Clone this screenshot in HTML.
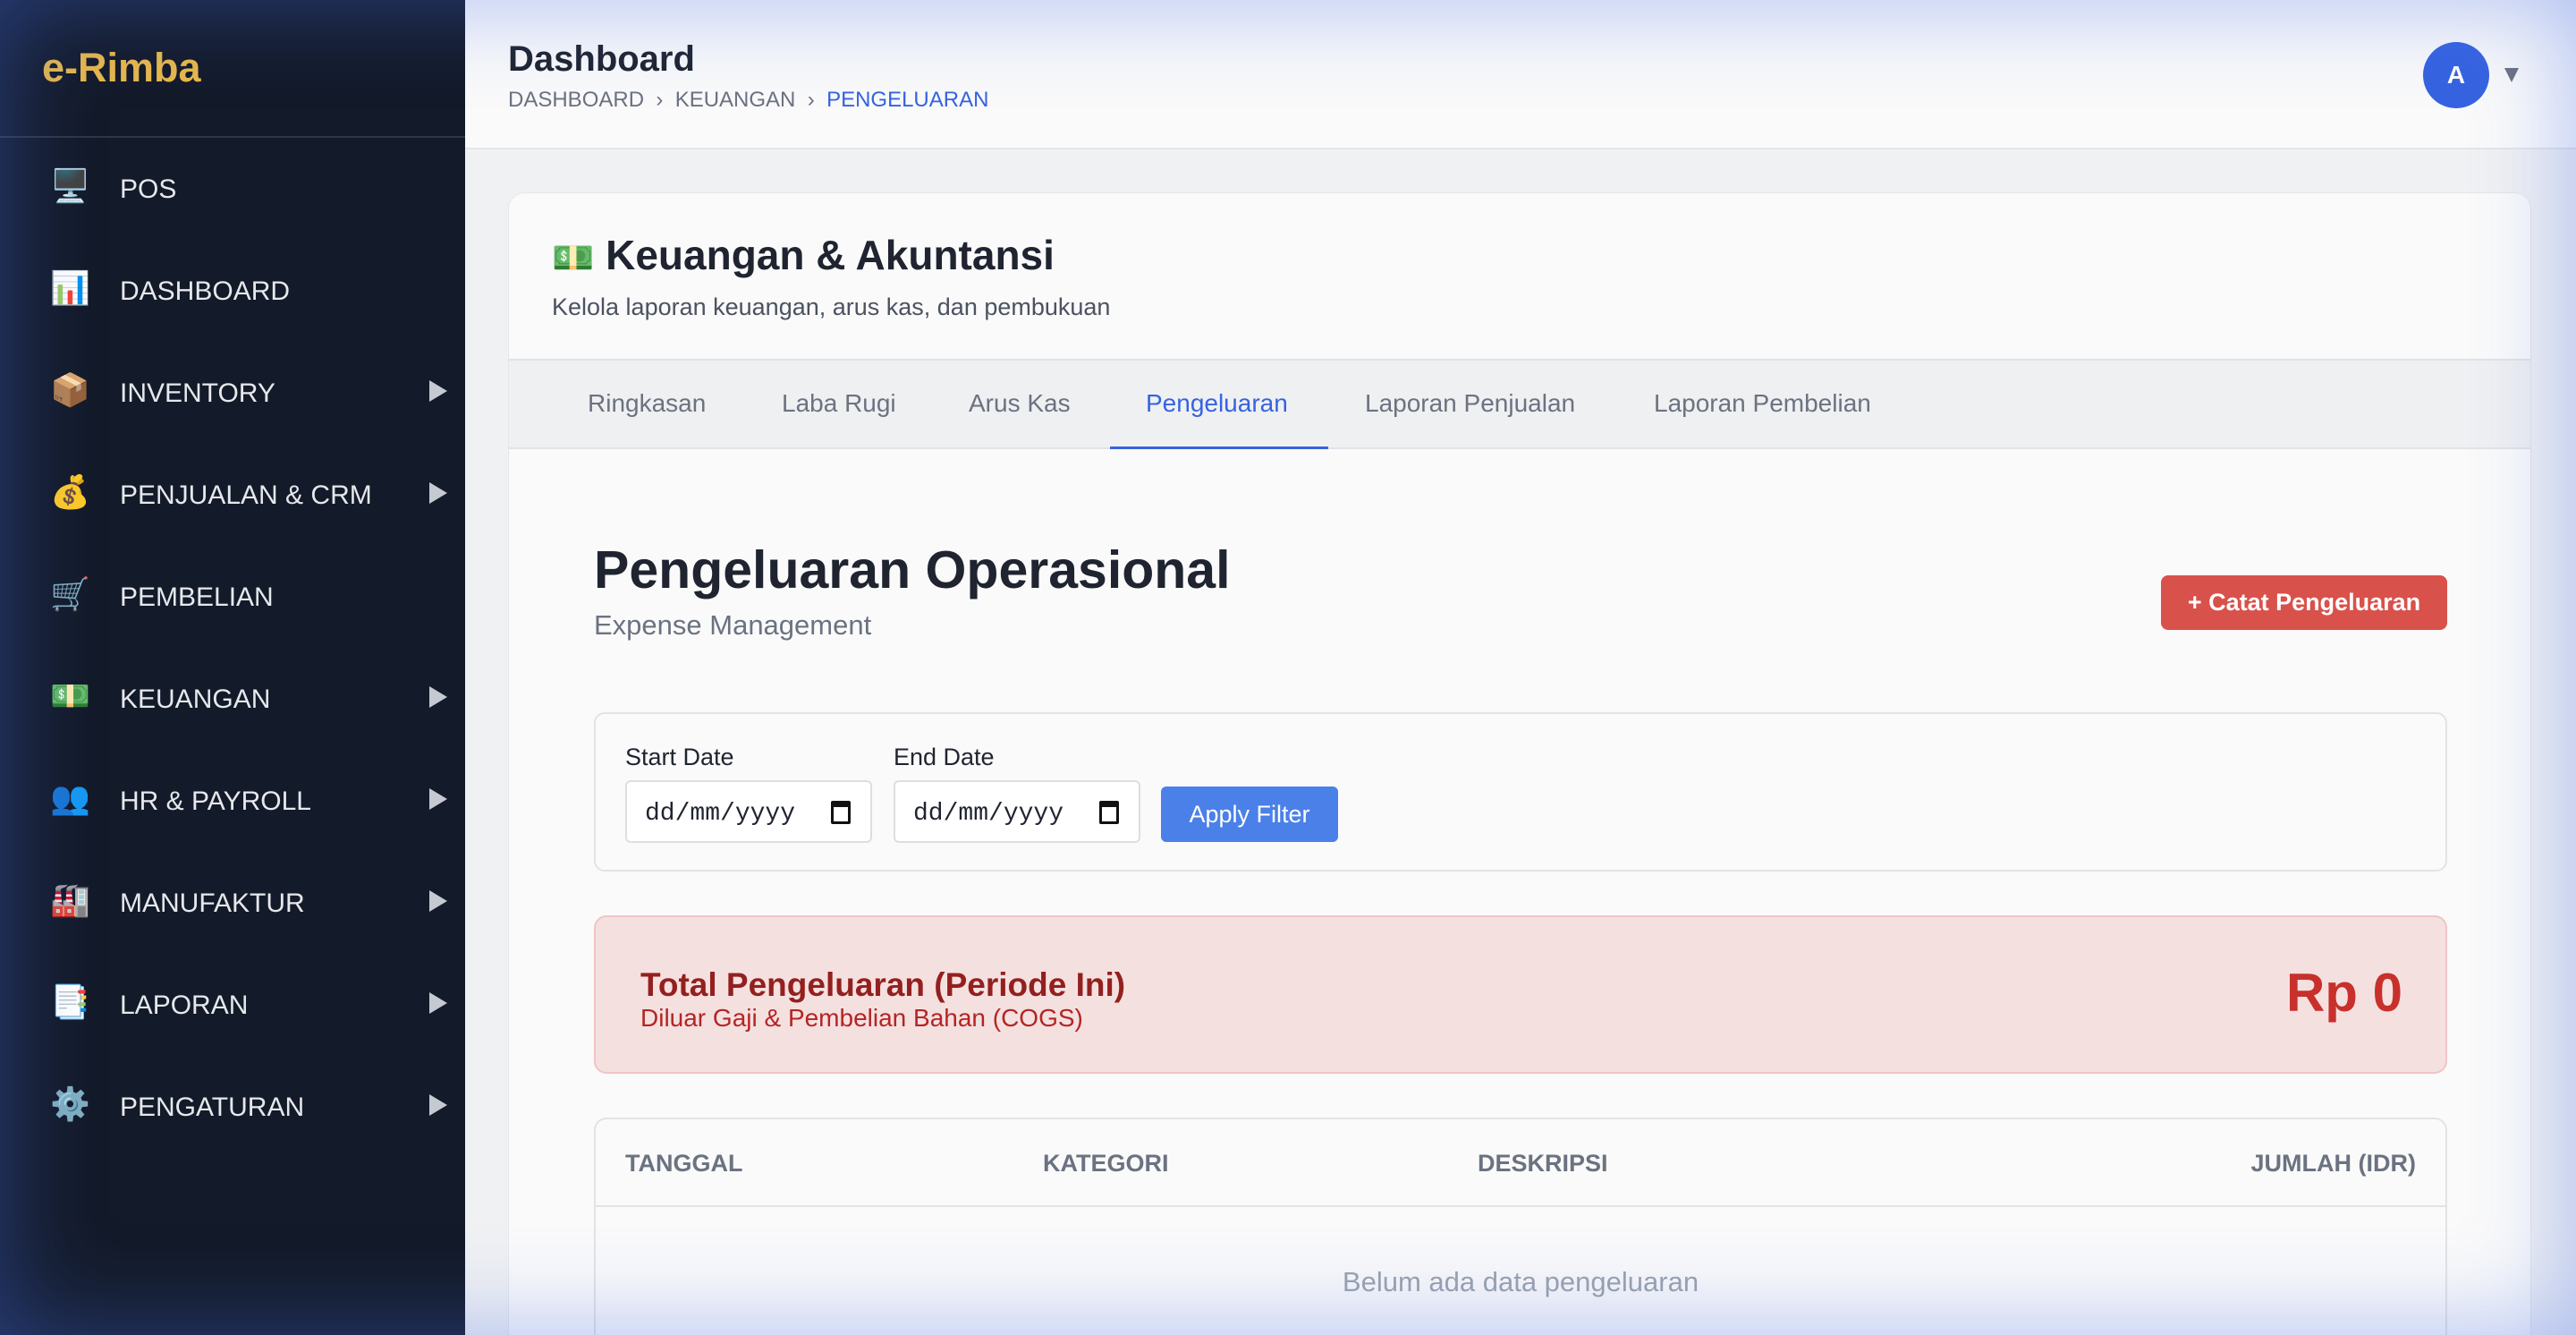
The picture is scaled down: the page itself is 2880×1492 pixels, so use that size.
<!DOCTYPE html>
<html><head><meta charset="utf-8"><style>
*{box-sizing:border-box;margin:0;padding:0}
html{width:2880px;height:1492px;overflow:hidden}
body{width:2880px;height:1492px;overflow:hidden;font-family:"Liberation Sans",sans-serif;background:#f0f1f3;position:relative}
.sb{position:absolute;left:0;top:0;width:520px;height:1492px;background:#131a29}
.logo{position:absolute;left:47px;top:50px;font-size:45px;font-weight:bold;color:#e8b84a}
.div{position:absolute;left:0;top:152px;width:520px;height:2px;background:#2f3647}
.nav{position:absolute;left:0;width:520px;height:60px;color:#e6e8ec;font-size:30px}
.nav .ic{position:absolute;left:56px;top:6px;font-size:36px;width:44px;text-align:center;font-family:"Noto Color Emoji","DejaVu Sans",sans-serif}
.nav .t{position:absolute;left:134px;top:14px}
.nav .ar{position:absolute;left:480px;top:16px;width:0;height:0;border-left:20px solid #c5c9d1;border-top:12px solid transparent;border-bottom:12px solid transparent}
.hd{position:absolute;left:520px;top:0;width:2360px;height:167px;background:#fafafa;border-bottom:2px solid #e4e5e8}
.hd h1{position:absolute;left:48px;top:44px;font-size:40px;color:#1f2430}
.bc{position:absolute;left:48px;top:98px;font-size:24px;color:#6b7280}
.bc b{color:#3663e0;font-weight:normal}
.av{position:absolute;left:2189px;top:47px;width:74px;height:74px;border-radius:50%;background:#3663e0;color:#fff;font-weight:bold;font-size:28px;text-align:center;line-height:74px}
.dd{position:absolute;left:2280px;top:76px;border-top:16px solid #6b7280;border-left:8px solid transparent;border-right:8px solid transparent}
.card{position:absolute;left:568px;top:215px;width:2262px;height:1277px;background:#fafafa;border-radius:18px 18px 0 0;border:1px solid #e6e7ea;border-bottom:none;overflow:hidden}
.ct{position:absolute;left:48px;top:42px;font-size:46px;font-weight:bold;color:#1f2430}
.cs{position:absolute;left:48px;top:112px;font-size:27px;color:#4b5260}
.tabs{position:absolute;left:0;top:185px;width:2260px;height:101px;background:#eff0f2;border-top:2px solid #e2e3e6;border-bottom:2px solid #e2e3e6}
.tab{position:absolute;top:32px;font-size:28px;color:#6b7280}
.ul{position:absolute;left:672px;top:96px;width:244px;height:3px;background:#3663e0}
.abs{position:absolute}
.inp{position:absolute;width:276px;height:70px;border:2px solid #dcdee2;border-radius:6px;background:#fff;font-family:"Liberation Mono",monospace;font-size:28px;padding:20px 0 0 20px;color:#1f2430}
.inp i{position:absolute;right:22px;top:21px;width:22px;height:26px;border:3px solid #111;border-top-width:7px;border-radius:2px}
</style></head><body>
<div class="sb">
<div class="logo">e-Rimba</div><div class="div"></div>
<div class="nav" style="top:181px"><span class="ic">🖥️</span><span class="t">POS</span></div>
<div class="nav" style="top:295px"><span class="ic">📊</span><span class="t">DASHBOARD</span></div>
<div class="nav" style="top:409px"><span class="ic">📦</span><span class="t">INVENTORY</span><span class="ar"></span></div>
<div class="nav" style="top:523px"><span class="ic">💰</span><span class="t">PENJUALAN &amp; CRM</span><span class="ar"></span></div>
<div class="nav" style="top:637px"><span class="ic">🛒</span><span class="t">PEMBELIAN</span></div>
<div class="nav" style="top:751px"><span class="ic">💵</span><span class="t">KEUANGAN</span><span class="ar"></span></div>
<div class="nav" style="top:865px"><span class="ic">👥</span><span class="t">HR &amp; PAYROLL</span><span class="ar"></span></div>
<div class="nav" style="top:979px"><span class="ic">🏭</span><span class="t">MANUFAKTUR</span><span class="ar"></span></div>
<div class="nav" style="top:1093px"><span class="ic">📑</span><span class="t">LAPORAN</span><span class="ar"></span></div>
<div class="nav" style="top:1207px"><span class="ic">⚙️</span><span class="t">PENGATURAN</span><span class="ar"></span></div>
</div>
<div class="hd"><h1>Dashboard</h1><div class="bc">DASHBOARD &nbsp;›&nbsp; KEUANGAN &nbsp;›&nbsp; <b>PENGELUARAN</b></div><div class="av">A</div><div class="dd"></div></div>
<div class="card">
<div class="ct"><span style="font-family:'Noto Color Emoji','DejaVu Sans',sans-serif;font-size:38px">💵</span> Keuangan &amp; Akuntansi</div>
<div class="cs">Kelola laporan keuangan, arus kas, dan pembukuan</div>
<div class="tabs">
<span class="tab" style="left:88px">Ringkasan</span>
<span class="tab" style="left:305px">Laba Rugi</span>
<span class="tab" style="left:514px">Arus Kas</span>
<span class="tab" style="left:712px;color:#3663e0">Pengeluaran</span>
<span class="tab" style="left:957px">Laporan Penjualan</span>
<span class="tab" style="left:1280px">Laporan Pembelian</span>
<div class="ul"></div></div>
<div class="abs" style="left:95px;top:387px;font-size:59px;font-weight:bold;color:#1f2430">Pengeluaran Operasional</div>
<div class="abs" style="left:95px;top:465px;font-size:31px;color:#6b7280">Expense Management</div>
<div class="abs" style="left:1847px;top:427px;width:320px;height:61px;background:#d9514b;border-radius:8px;color:#fff;font-weight:bold;font-size:27px;text-align:center;line-height:61px">+ Catat Pengeluaran</div>
<div class="abs" style="left:95px;top:580px;width:2072px;height:178px;border:2px solid #e2e3e6;border-radius:12px">
<div class="abs" style="left:33px;top:33px;font-size:27px;color:#1f2430">Start Date</div>
<div class="abs" style="left:333px;top:33px;font-size:27px;color:#1f2430">End Date</div>
<div class="inp" style="left:33px;top:74px">dd/mm/yyyy<i></i></div>
<div class="inp" style="left:333px;top:74px">dd/mm/yyyy<i></i></div>
<div class="abs" style="left:632px;top:81px;width:198px;height:62px;background:#4a80e8;border-radius:6px;color:#fff;font-size:27px;text-align:center;line-height:62px">Apply Filter</div>
</div>
<div class="abs" style="left:95px;top:807px;width:2072px;height:177px;background:#f5e0e0;border:2px solid #f2c4c4;border-radius:14px">
<div class="abs" style="left:50px;top:55px;font-size:37px;font-weight:bold;color:#93201e">Total Pengeluaran (Periode Ini)</div>
<div class="abs" style="left:50px;top:97px;font-size:28px;color:#b42524">Diluar Gaji &amp; Pembelian Bahan (COGS)</div>
<div class="abs" style="right:48px;top:50px;font-size:60px;font-weight:bold;color:#c8302c">Rp 0</div>
</div>
<div class="abs" style="left:95px;top:1033px;width:2072px;height:260px;border:2px solid #e2e3e6;border-bottom:none;border-radius:14px 14px 0 0">
<div class="abs" style="left:0;top:96px;width:2068px;height:2px;background:#e2e3e6"></div>
<div class="abs" style="left:33px;top:34px;font-size:27px;font-weight:bold;color:#6b7280">TANGGAL</div>
<div class="abs" style="left:500px;top:34px;font-size:27px;font-weight:bold;color:#6b7280">KATEGORI</div>
<div class="abs" style="left:986px;top:34px;font-size:27px;font-weight:bold;color:#6b7280">DESKRIPSI</div>
<div class="abs" style="right:33px;top:34px;font-size:27px;font-weight:bold;color:#6b7280">JUMLAH (IDR)</div>
<div class="abs" style="left:0;width:2068px;top:164px;font-size:31px;color:#9ca3af;text-align:center">Belum ada data pengeluaran</div>
</div>
</div>
<div style="position:absolute;left:0;top:0;width:2880px;height:1492px;pointer-events:none;box-shadow:inset 0 0 110px rgba(70,110,230,0.45)"></div>
</body></html>
